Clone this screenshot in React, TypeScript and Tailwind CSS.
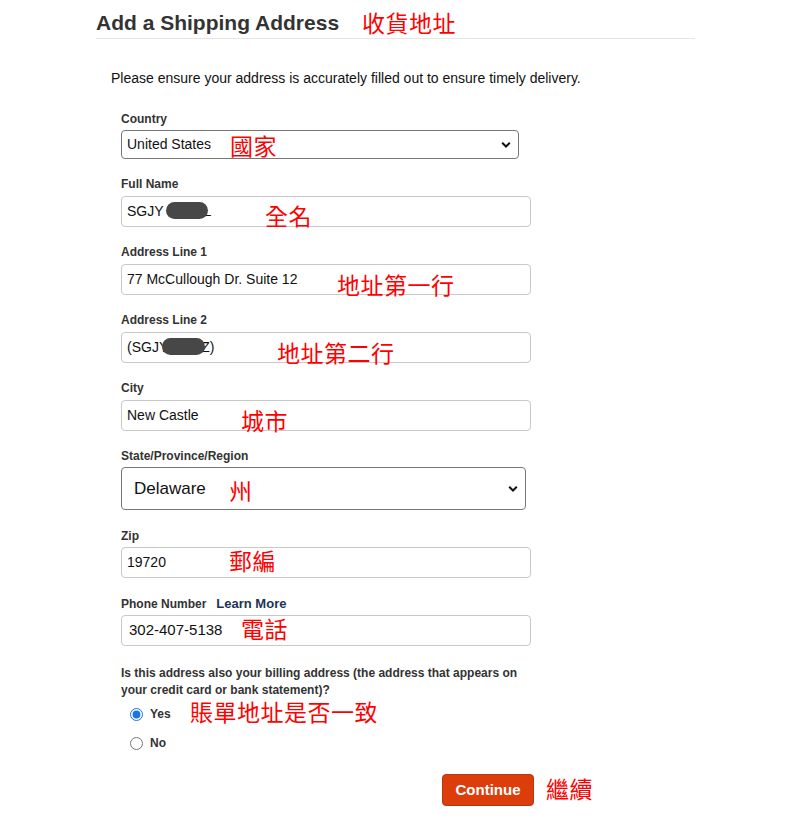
import React from "react";

const note = "absolute whitespace-nowrap text-[23px] leading-6 tracking-[0.5px] text-[#f00] font-['Noto_Sans_CJK_TC',serif] pointer-events-none";

function Chevron() {
  return (
    <svg className="absolute right-[7px] top-1/2 -translate-y-1/2" width="10" height="7" viewBox="0 0 10 7">
      <path d="M1.2 1.3 L5 5 L8.8 1.3" fill="none" stroke="#111" strokeWidth="2" />
    </svg>
  );
}

function Blob({ w }: { w: number }) {
  return (
    <span
      className="relative z-10 inline-block h-[17px] rounded-full bg-[#474747] align-[-3px]"
      style={{ width: w }}
    />
  );
}

function Field({
  label,
  extra,
  labelGap,
  className,
  children,
}: {
  label: string;
  extra?: React.ReactNode;
  labelGap: string;
  className?: string;
  children: React.ReactNode;
}) {
  return (
    <div className={`flex flex-col ${className ?? ""}`}>
      <div className={`flex items-center text-[12px] font-bold leading-[14px] text-[#333] ${labelGap}`}>
        {label}
        {extra}
      </div>
      {children}
    </div>
  );
}

function TextBox({ children, note: n, noteClass, textClass }: { children: React.ReactNode; note: string; noteClass: string; textClass?: string }) {
  return (
    <div className={`relative flex h-[31px] w-[410px] items-center rounded-[4px] border border-[#c9c9c9] bg-white px-[5px] text-[#111] ${textClass ?? "text-[14px]"}`}>
      <span className="whitespace-nowrap">{children}</span>
      <span className={`${note} ${noteClass}`}>{n}</span>
    </div>
  );
}

export default function App() {
  return (
    <main className="min-h-screen bg-white font-['Liberation_Sans',Arial,sans-serif] text-[#111]">
      <div className="ml-[96px] w-[599px]">
        <div className="flex items-end gap-[23px] border-b border-[#e6e6e6] pt-[10px] pb-[3px]">
          <h1 className="text-[21px] font-bold leading-6 text-[#333]">Add a Shipping Address</h1>
          <span className="mb-[1px] text-[23px] leading-6 tracking-[0.5px] text-[#f00] font-['Noto_Sans_CJK_TC',serif]">收貨地址</span>
        </div>

        <p className="ml-[15px] mt-[31px] text-[14px] leading-4 text-[#111]">
          Please ensure your address is accurately filled out to ensure timely delivery.
        </p>

        <form className="ml-[25px] mt-[26px] flex flex-col gap-[18px]">
          <Field label="Country" labelGap="mb-[4px]">
            <div className="relative flex h-[29px] w-[398px] items-center rounded-[4px] border border-[#767676] bg-white px-[5px] text-[14px]">
              United States
              <span className={`${note} left-[108px] top-[2px]`}>國家</span>
              <Chevron />
            </div>
          </Field>

          <Field label="Full Name" labelGap="mb-[5px]">
            <TextBox note="全名" noteClass="left-[143px] top-[6px]">
              SGJY<span className="ml-[2px]" /><Blob w={42} /><span className="-ml-[4px]">L</span>
            </TextBox>
          </Field>

          <Field label="Address Line 1" labelGap="mb-[5px]">
            <TextBox note="地址第一行" noteClass="left-[215px] top-[7px]">
              77 McCullough Dr. Suite 12
            </TextBox>
          </Field>

          <Field label="Address Line 2" labelGap="mb-[5px]">
            <TextBox note="地址第二行" noteClass="left-[155px] top-[7px]">
              (SGJ<span className="-mr-[6px]">Y</span><Blob w={43} /><span className="-ml-[4px]">Z)</span>
            </TextBox>
          </Field>

          <Field label="City" labelGap="mb-[5px]">
            <TextBox note="城市" noteClass="left-[119px] top-[7px]">
              New Castle
            </TextBox>
          </Field>

          <Field label="State/Province/Region" labelGap="mb-[4px]">
            <div className="relative flex h-[43px] w-[405px] items-center rounded-[4px] border border-[#767676] bg-white pl-[12px] text-[17px]">
              Delaware
              <span className={`${note} left-[107px] top-[10px]`}>州</span>
              <Chevron />
            </div>
          </Field>

          <Field label="Zip" labelGap="mb-[4px]" className="mt-[1px]">
            <TextBox note="郵編" noteClass="left-[107px] top-[0px]">
              19720
            </TextBox>
          </Field>

          <Field
            label="Phone Number"
            labelGap="mb-[4px]"
            className="mt-[1px]"
            extra={<a className="ml-[10px] text-[13px] text-[#1d3557]">Learn More</a>}
          >
            <TextBox note="電話" noteClass="left-[119px] top-[0px]" textClass="text-[15px] pl-[7px]">
              302-407-5138
            </TextBox>
          </Field>

          <div className="relative mt-[1px] flex flex-col">
            <p className="w-[410px] text-[12px] font-bold leading-[17px] text-[#333]">
              Is this address also your billing address (the address that appears on your credit card or bank statement)?
            </p>
            <label className="mt-[6px] flex items-center text-[12px] font-bold text-[#333]">
              <input type="radio" name="billing" defaultChecked className="ml-[9px] mr-[7px] h-[13px] w-[13px] accent-[#1a73e8]" />
              Yes
            </label>
            <label className="mt-[11px] flex items-center text-[12px] font-bold text-[#333]">
              <input type="radio" name="billing" className="ml-[9px] mr-[7px] h-[13px] w-[13px]" />
              No
            </label>
            <span className={`${note} left-[69px] top-[35px] !leading-[22px]`}>賬單地址是否一致</span>
          </div>

          <div className="ml-[321px] mt-[4px] flex items-center gap-[12px]">
            <button
              type="button"
              className="h-[32px] w-[92px] rounded-[4px] border border-[#b8360a] bg-[#dc3d0b] text-[15px] font-bold text-white"
            >
              Continue
            </button>
            <span className="-mt-[4px] text-[23px] leading-6 tracking-[0.5px] text-[#f00] font-['Noto_Sans_CJK_TC',serif]">繼續</span>
          </div>
        </form>
      </div>
    </main>
  );
}
